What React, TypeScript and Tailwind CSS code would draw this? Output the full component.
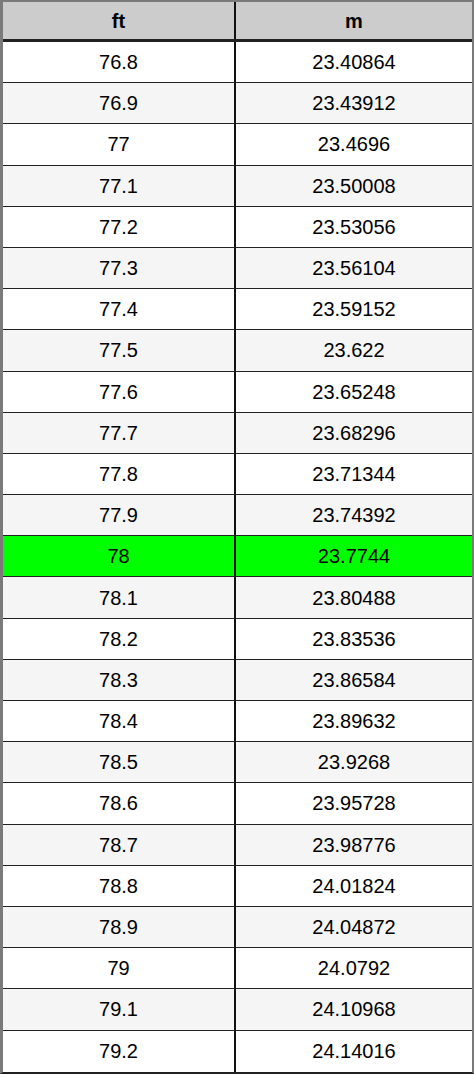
import React from "react";

const rows: [string, string][] = [
  ["76.8", "23.40864"],
  ["76.9", "23.43912"],
  ["77", "23.4696"],
  ["77.1", "23.50008"],
  ["77.2", "23.53056"],
  ["77.3", "23.56104"],
  ["77.4", "23.59152"],
  ["77.5", "23.622"],
  ["77.6", "23.65248"],
  ["77.7", "23.68296"],
  ["77.8", "23.71344"],
  ["77.9", "23.74392"],
  ["78", "23.7744"],
  ["78.1", "23.80488"],
  ["78.2", "23.83536"],
  ["78.3", "23.86584"],
  ["78.4", "23.89632"],
  ["78.5", "23.9268"],
  ["78.6", "23.95728"],
  ["78.7", "23.98776"],
  ["78.8", "24.01824"],
  ["78.9", "24.04872"],
  ["79", "24.0792"],
  ["79.1", "24.10968"],
  ["79.2", "24.14016"],
];

export default function App() {
  return (
    <div className="w-[474px] h-[1077px] bg-white" style={{ fontFamily: '"Liberation Sans", Arial, sans-serif' }}>
      <div className="w-[474px] border-t-2 border-l-[3px] border-r-2 border-[#7a7a7a] border-b-2 border-b-[#222]">
        <div className="flex h-[40px] bg-[#cccccc] border-b-[3px] border-[#222] text-[20px] font-bold text-black">
          <div className="w-[231px] flex items-center justify-center">ft</div>
          <div className="w-[2px] bg-[#111]" />
          <div className="flex-1 flex items-center justify-center">m</div>
        </div>
        {rows.map(([a, b], i) => {
          const hl = a === "78";
          const bg = hl ? "bg-[#00ff00]" : i % 2 === 1 ? "bg-[#f5f5f5]" : "bg-white";
          return (
            <div
              key={a}
              className={`flex h-[41.2px] ${bg} ${i < rows.length - 1 ? "border-b border-[#222]" : ""} text-[20px] text-black`}
            >
              <div className="w-[231px] flex items-center justify-center">{a}</div>
              <div className="w-[2px] bg-[#111]" />
              <div className="flex-1 flex items-center justify-center">{b}</div>
            </div>
          );
        })}
      </div>
    </div>
  );
}
